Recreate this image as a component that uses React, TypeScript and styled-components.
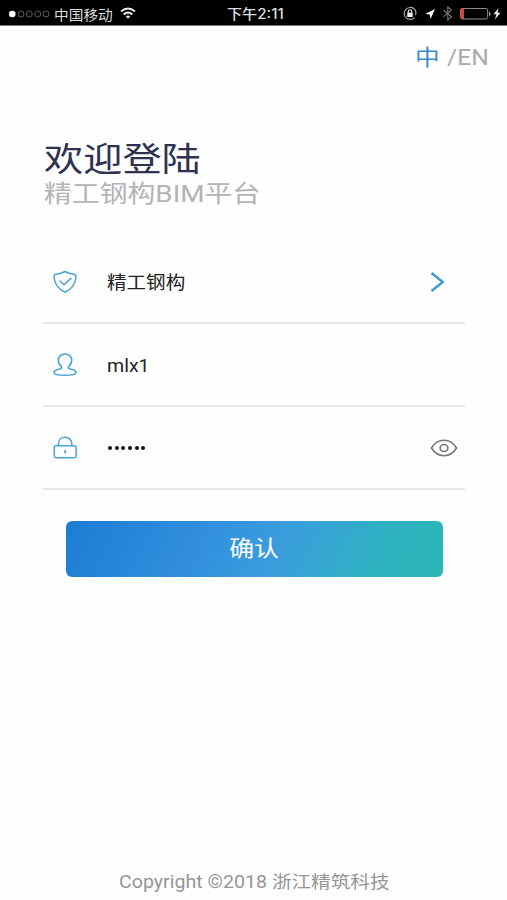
import React from 'react';
import styled, { createGlobalStyle } from 'styled-components';

const GlobalStyle = createGlobalStyle`
  *, *::before, *::after { box-sizing: border-box; }
  body { margin: 0; background: #fefefe; }
`;

const cjk = `'Noto Sans CJK SC', sans-serif`;

const Screen = styled.main`
  width: 507px;
  height: 900px;
  display: flex;
  flex-direction: column;
  overflow: hidden;
  background: #fefefe;
  font-family: 'Roboto', ${cjk};
`;

const StatusBar = styled.header`
  flex: none;
  height: 26px;
  padding: 2px 5px 0 8px;
  display: grid;
  grid-template-columns: 219px 1fr 99px;
  align-items: center;
  background: #000;
  border-bottom: 1px solid #777;
  color: #dcdcdc;
`;

const StatusGroup = styled.div`
  display: flex;
  align-items: center;
  height: 23px;
  svg { display: block; flex: none; }
`;

/* Horizontally widened lettering; scales from its left edge. */
const Wide = styled.span<{ $x: number }>`
  display: inline-block;
  white-space: nowrap;
  transform: scaleX(${(p) => p.$x});
  transform-origin: left center;
`;

const Carrier = styled.div`
  width: 66px;
  margin-left: 4px;
  font: 400 14px/22px ${cjk};
`;

const Clock = styled.time`
  font: 500 14px/23px 'Inter', ${cjk};
`;

const LanguageBar = styled.nav`
  flex: none;
  height: 60px;
  padding: 13px 18px 0 415px;
  display: flex;
`;

const ActiveLanguage = styled.span`
  width: 32px;
  color: #3c8dc9;
  font: 400 22px/32px ${cjk};
`;

const OtherLanguage = styled.span`
  color: #a9aaad;
  font: 400 22px/38px 'Roboto', sans-serif;
`;

const Heading = styled.section`
  flex: none;
  height: 155px;
  padding: 51px 0 0 44px;
`;

const Title = styled.h1`
  margin: 0;
  color: #2f3150;
  font: 400 33.5px/40px ${cjk};
`;

const Subtitle = styled.p`
  margin: 0;
  color: #b3b4b6;
  font: 400 24px/34px 'Roboto', ${cjk};
`;

const Form = styled.form`
  flex: none;
  padding: 0 42px 0 43px;
`;

const Field = styled.div`
  height: 83px;
  border-bottom: 2px solid #e7e7e7;
  padding: 0 7px 0 9px;
  display: grid;
  grid-template-columns: 55px 1fr 28px;
  align-items: center;
  color: #222;
  svg { display: block; }
`;

const Value = styled.div`
  height: 30px;
  font: 400 17.8px/32px 'Roboto', ${cjk};
`;

const Dots = styled.div`
  display: flex;
  gap: 2.7px;
  padding-left: 1px;
`;

const Dot = styled.i`
  width: 4px;
  height: 4px;
  border-radius: 50%;
  background: #111;
`;

const Submit = styled.button`
  display: block;
  width: 377px;
  height: 56px;
  margin: 31px 0 0 23px;
  padding: 0 0 5px;
  border: 0;
  border-radius: 6px;
  background: linear-gradient(115deg, #1d7dd3 0%, #318ede 34%, #3a9ddd 56%, #2fb2c2 82%, #2bb6b5 100%);
  color: #fff;
  font: 400 22px/51px ${cjk};
  span { transform-origin: center; }
`;

const Footer = styled.footer`
  margin-top: auto;
  height: 36px;
  padding-left: 119px;
  color: #94959a;
  font: 400 17.5px/37px 'Roboto', ${cjk};
`;

const Signal = () => (
  <svg width="42" height="12" viewBox="0 0 42 12">
    <circle cx="4.3" cy="6" r="3.3" fill="#fff" />
    {[13, 21.3, 29.7, 38].map((x) => (
      <circle key={x} cx={x} cy="6" r="3" fill="none" stroke="#666" strokeWidth=".9" />
    ))}
  </svg>
);

const Wifi = () => (
  <svg width="16" height="13" viewBox="0 0 16 13" fill="none" stroke="#eee" strokeWidth="1.9">
    <path d="M1 4.5Q8-1.5 15 4.5M3.7 7.5Q8 3.7 12.3 7.5" />
    <path d="M5.8 9.3Q8 7.7 10.2 9.3L8 11.8Z" fill="#eee" stroke="none" />
  </svg>
);

const StatusIcons = () => (
  <svg width="99" height="20" viewBox="0 0 99 20" fill="none">
    <path d="M11 4.8A6 6 0 1 0 11.5 13.7M10 4A6 6 0 0 1 12.5 11" stroke="#aaa" strokeWidth="1.2" />
    <rect x="4.2" y="8.7" width="5.5" height="4.3" fill="#eee" />
    <path d="M5.3 9V7.4a1.7 1.7 0 0 1 3.4 0V9" stroke="#eee" strokeWidth="1.1" />
    <path d="M32 5L22.2 9.9L26.8 10.4L27.5 15Z" fill="#fff" />
    <path d="M40.5 6L48.5 12.8L44.8 16V3L48.5 6L40.5 12.8" stroke="#777" strokeWidth="1.1" />
    <rect x="57.6" y="4.5" width="27" height="10.5" rx="1.5" stroke="#8b8b8b" />
    <rect x="58" y="4.5" width="3" height="10.5" fill="#e53c3c" />
    <path d="M86 7.2Q89 9.8 86 12.4Z" fill="#aaa" />
    <path d="M95.5 4L90.5 10.2H93.5L91.8 15.5L97.5 8.8H94.5Z" fill="#eee" />
  </svg>
);

const ShieldIcon = () => (
  <svg width="26" height="26" viewBox="0 0 26 26" fill="none" stroke="#4aa3d5" strokeWidth="1.5" strokeLinejoin="round" strokeLinecap="round">
    <path d="M13 2.5C10 4.3 6.5 5 3.2 5.4C1.8 5.6 2.1 7 2.2 9C2.5 14.5 6.5 20.5 13 23.2C19.5 20.5 23.5 14.5 23.8 9C23.9 7 24.2 5.6 22.8 5.4C19.5 5 16 4.3 13 2.5Z" />
    <path d="M8 12L12 15.8L19 9.4" />
  </svg>
);

const UserIcon = () => (
  <svg width="26" height="26" viewBox="0 0 26 26" fill="none" stroke="#4aa3d5" strokeWidth="1.6" strokeLinejoin="round">
    <path d="M13 2C8.7 2 6.2 4.8 6.3 8.3C6.4 11.1 7.5 13.1 9.2 14.3C10.3 15.3 9.6 16.5 7.7 17C4.2 17.8 2 18.8 2 20.5C2 22.6 5.6 23.3 13 23.3S24 22.6 24 20.5C24 18.8 21.8 17.8 18.3 17C16.4 16.5 15.7 15.3 16.8 14.3C18.5 13.1 19.6 11.1 19.7 8.3C19.8 4.8 17.3 2 13 2Z" />
  </svg>
);

const LockIcon = () => (
  <svg width="26" height="26" viewBox="0 0 26 26" fill="none" stroke="#4aa3d5" strokeWidth="1.5" strokeLinecap="round">
    <rect x="2.3" y="10.7" width="21.8" height="12" rx="1.7" />
    <path d="M6.5 10.5V8.4C6.5 4.7 9.3 2.2 13 2.2S19.7 4.7 19.7 8.4V10.5" />
    <path d="M13.2 15.8V17.5" strokeWidth="1.8" />
  </svg>
);

const ChevronIcon = () => (
  <svg width="28" height="24" viewBox="0 0 28 24" fill="none" stroke="#3f97d2" strokeWidth="2.3">
    <path d="M1.5 3L12.8 12L1.5 21" />
  </svg>
);

const EyeIcon = () => (
  <svg width="28" height="22" viewBox="0 0 28 22" fill="none" stroke="#77787a" strokeWidth="1.6">
    <path d="M1.5 11C4.5 6 9 3.3 14 3.3S23.5 6 26.5 11C23.5 16 19 18.7 14 18.7S4.5 16 1.5 11Z" />
    <ellipse cx="14" cy="11" rx="3.9" ry="3.5" />
  </svg>
);

export default function App() {
  return (
    <>
      <GlobalStyle />
      <Screen>
        <StatusBar>
          <StatusGroup>
            <Signal />
            <Carrier><Wide $x={1.05}>中国移动</Wide></Carrier>
            <Wifi />
          </StatusGroup>
          <Clock><Wide $x={1.08}>下午2:11</Wide></Clock>
          <StatusGroup><StatusIcons /></StatusGroup>
        </StatusBar>
        <LanguageBar>
          <ActiveLanguage><Wide $x={1.12}>中</Wide></ActiveLanguage>
          <OtherLanguage><Wide $x={1.12}>/EN</Wide></OtherLanguage>
        </LanguageBar>
        <Heading>
          <Title><Wide $x={1.17}>欢迎登陆</Wide></Title>
          <Subtitle><Wide $x={1.16}>精工钢构BIM平台</Wide></Subtitle>
        </Heading>
        <Form onSubmit={(e) => e.preventDefault()}>
          <Field>
            <ShieldIcon />
            <Value><Wide $x={1.1}>精工钢构</Wide></Value>
            <ChevronIcon />
          </Field>
          <Field>
            <UserIcon />
            <Value><Wide $x={1.1}>mlx1</Wide></Value>
          </Field>
          <Field>
            <LockIcon />
            <Dots>{Array.from({ length: 6 }, (_, i) => <Dot key={i} />)}</Dots>
            <EyeIcon />
          </Field>
          <Submit type="submit"><Wide $x={1.13}>确认</Wide></Submit>
        </Form>
        <Footer><Wide $x={1.12}>Copyright ©2018 浙江精筑科技</Wide></Footer>
      </Screen>
    </>
  );
}
